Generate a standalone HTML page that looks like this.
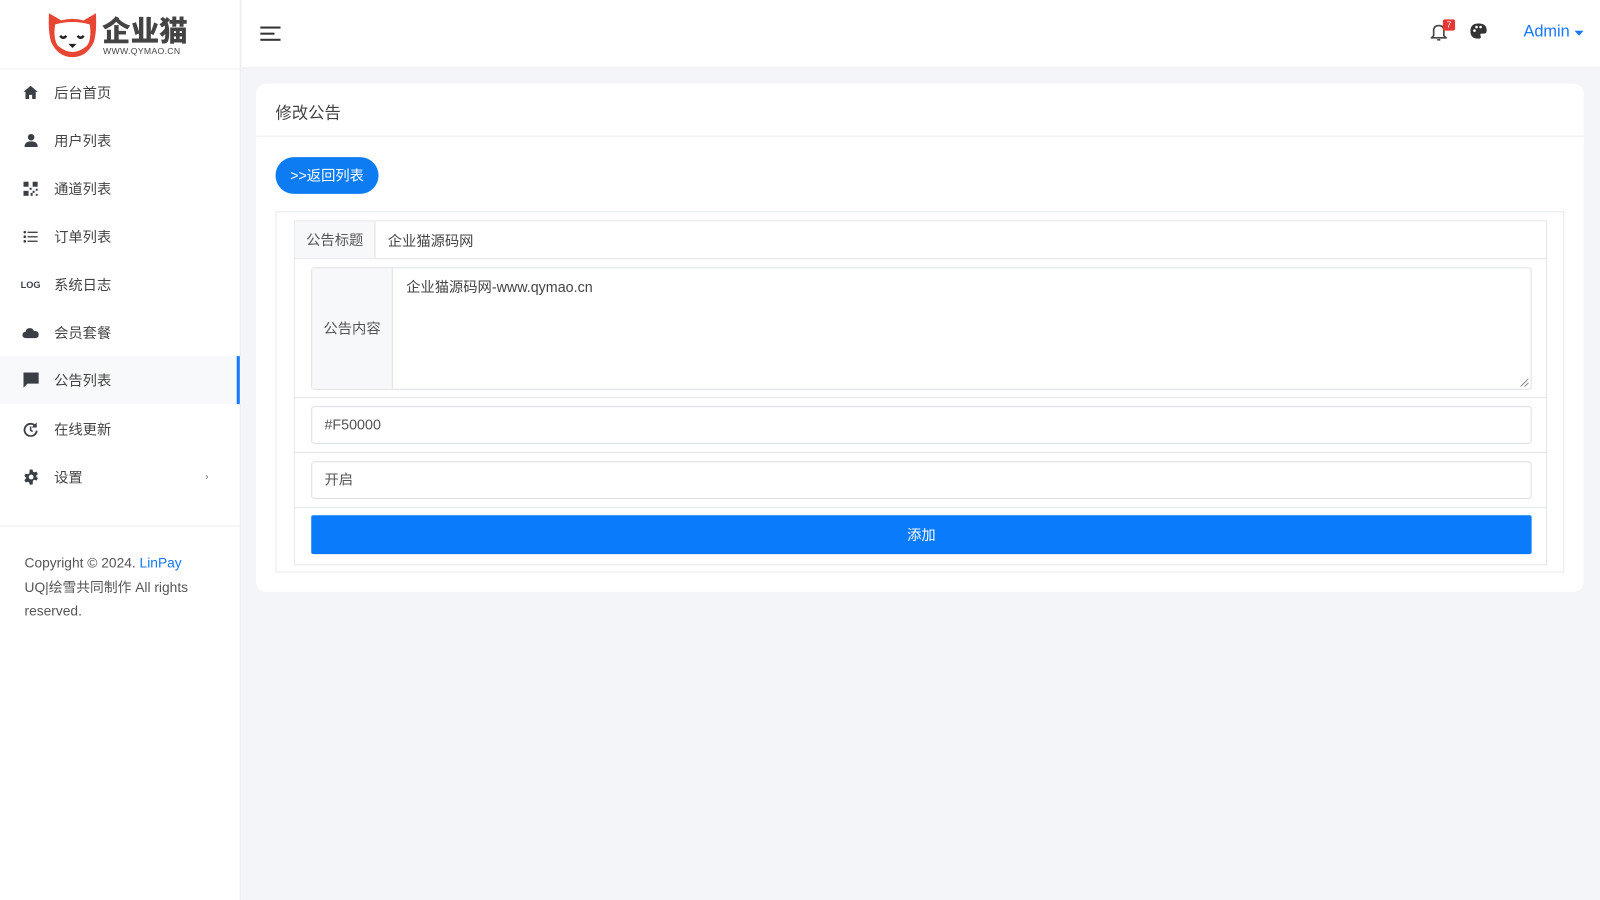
<!DOCTYPE html>
<html><head><meta charset="utf-8">
<style>
*{box-sizing:border-box;margin:0;padding:0}
html,body{width:1600px;height:900px;overflow:hidden;background:#f3f5f9}
body{font-family:"Liberation Sans","Noto Sans CJK SC",sans-serif;font-size:14px;color:#333}
.wrap{position:absolute;left:0;top:0;width:1568px;height:882px;transform:scale(1.0204);transform-origin:0 0}
.side{position:absolute;left:0;top:0;width:236px;height:882px;background:#fff;border-right:1px solid #e8eaef}
.logo{height:68px;border-bottom:1px solid #eef0f3;position:relative}
.item{position:absolute;left:0;width:236px;height:47px;display:flex;align-items:center;color:#444;font-size:14px}
.item .ic{width:16px;height:16px;margin-left:22px;margin-right:15px;display:flex;align-items:center;justify-content:center}
.item.act{background:#f8f9fa}
.item.act:after{content:"";position:absolute;right:1px;top:0;width:3px;height:47px;background:#1677ff}
.top{position:absolute;left:237px;top:0;width:1331px;height:67px;background:#fff;border-bottom:1px solid #e8eaef}
.card{position:absolute;left:251px;top:82px;width:1301px;height:498px;background:#fff;border-radius:10px}
.ch{height:52px;border-bottom:1px solid #eceef1;padding:15px 19px;font-size:16px;color:#444}
.btn{position:absolute;left:19px;top:72px;width:101px;height:36px;border-radius:18px;background:#0d7cf2;color:#fff;font-size:14px;text-align:center;line-height:36px}
.box{position:absolute;border:1px solid #e6e8eb}
.lab{background:#f7f8fa;color:#555;border-right:1px solid #dfe2e6;position:absolute;top:0;bottom:0;display:flex;align-items:center;justify-content:center}
.inp{position:absolute;left:52px;width:1196px;height:37px;border:1px solid #dcdfe3;border-radius:3px;padding:0 12px;line-height:35px;color:#555}
</style></head><body>
<div class="wrap">
<div class="side">
 <div class="logo">
  <svg style="position:absolute;left:45px;top:11px" width="52" height="46" viewBox="0 0 52 46"><path d="M3 2 L15 9 Q26 6 37 9 L49 2 Q50 20 47 30 Q40 45 26 45 Q12 45 5 30 Q2 20 3 2Z" fill="#e84634"/><path d="M9 13 Q26 8 43 13 Q45 28 40 34 Q33 40 26 40 Q19 40 12 34 Q7 28 9 13Z" fill="#fff"/><path d="M14 24 q3 4 6 0" stroke="#222" stroke-width="2.4" fill="none"/><path d="M31 24 q3 4 6 0" stroke="#222" stroke-width="2.4" fill="none"/><path d="M22 32 h8 l-4 4z" fill="#222"/></svg>
  <div style="position:absolute;left:100px;top:9px;font-size:28px;font-weight:900;color:#444;letter-spacing:0">企业猫</div>
  <div style="position:absolute;left:101px;top:45px;font-size:8.5px;color:#444;letter-spacing:.3px">WWW.QYMAO.CN</div>
 </div>
 <div class="item" style="top:67px"><span class="ic"><svg width="14" height="13" viewBox="0 0 14 13"><path d="M7 0 L14 6 H12 V13 H8.5 V9 H5.5 V13 H2 V6 H0Z" fill="#3a3f46"/></svg></span>后台首页</div>
 <div class="item" style="top:114px"><span class="ic"><svg width="13" height="13" viewBox="0 0 13 13"><circle cx="6.5" cy="3.5" r="3.2" fill="#3a3f46"/><path d="M0 13 Q0 7.5 6.5 7.5 Q13 7.5 13 13Z" fill="#3a3f46"/></svg></span>用户列表</div>
 <div class="item" style="top:161px"><span class="ic"><svg width="14" height="14" viewBox="0 0 14 14" fill="#3a3f46"><rect x="0" y="0" width="5" height="5"/><rect x="9" y="0" width="5" height="5"/><rect x="0" y="9" width="5" height="5"/><rect x="6" y="6" width="2" height="2"/><rect x="9" y="9" width="2" height="2"/><rect x="12" y="12" width="2" height="2"/><rect x="12" y="7" width="2" height="2"/><rect x="7" y="11" width="2" height="3"/></svg></span>通道列表</div>
 <div class="item" style="top:208px"><span class="ic"><svg width="14" height="12" viewBox="0 0 14 12" fill="#3a3f46"><circle cx="1.3" cy="1.5" r="1.3"/><circle cx="1.3" cy="6" r="1.3"/><circle cx="1.3" cy="10.5" r="1.3"/><rect x="4" y="1" width="10" height="1.3"/><rect x="4" y="5.4" width="10" height="1.3"/><rect x="4" y="9.8" width="10" height="1.3"/></svg></span>订单列表</div>
 <div class="item" style="top:255px"><span class="ic" style="font-size:9px;font-weight:bold;color:#3a3f46">LOG</span>系统日志</div>
 <div class="item" style="top:302px"><span class="ic"><svg width="18" height="12" viewBox="0 0 18 12"><path d="M4 12 Q0 12 0 8.5 Q0 5.5 3.5 5 Q4 1 8 1 Q11.5 1 12.5 4 Q18 4 18 8 Q18 12 14 12Z" fill="#3a3f46"/></svg></span>会员套餐</div>
 <div class="item act" style="top:349px"><span class="ic"><svg width="15" height="15" viewBox="0 0 15 15"><path d="M0 0 H15 V11 H4 L0 15Z" fill="#3a3f46"/></svg></span>公告列表</div>
 <div class="item" style="top:397px"><span class="ic"><svg width="14" height="14" viewBox="0 0 14 14"><path d="M12 4 A6 6 0 1 0 13 8" stroke="#3a3f46" stroke-width="1.8" fill="none"/><path d="M13 0 V5 H8Z" fill="#3a3f46"/><path d="M7 4 V7.5 L9 9" stroke="#3a3f46" stroke-width="1.5" fill="none"/></svg></span>在线更新</div>
 <div class="item" style="top:444px"><span class="ic"><svg width="15" height="15" viewBox="0 0 16 16"><path fill="#3a3f46" d="M6.5 0h3l.4 2.2 1.6.9 2.1-.8 1.5 2.6-1.7 1.4v1.4l1.7 1.4-1.5 2.6-2.1-.8-1.6.9L9.5 16h-3l-.4-2.2-1.6-.9-2.1.8L.9 11.1l1.7-1.4V8.3L.9 6.9 2.4 4.3l2.1.8 1.6-.9z"/><circle cx="8" cy="8" r="2.5" fill="#fff"/></svg></span>设置<span style="position:absolute;left:201px;font-size:10px;color:#666">›</span></div>
 <div style="position:absolute;top:515px;left:0;width:236px;border-top:1px solid #e8eaef"></div>
 <div style="position:absolute;top:540px;left:24px;width:180px;font-size:13.5px;line-height:23.5px;color:#555">Copyright © 2024. <span style="color:#1677ff">LinPay</span> UQ|绘雪共同制作 All rights reserved.</div>
</div>
<div class="top">
 <svg style="position:absolute;left:18px;top:25px" width="20" height="16" viewBox="0 0 20 16"><rect y="1" width="20" height="2" fill="#333"/><rect y="7" width="14" height="2" fill="#333"/><rect y="13" width="20" height="2" fill="#333"/></svg>
 <svg style="position:absolute;left:1165px;top:22px" width="16" height="19" viewBox="0 0 16 19"><path d="M3 13 V8 Q3 3 8 3 Q13 3 13 8 V13 L15 15 H1Z" stroke="#444" stroke-width="1.6" fill="none"/><path d="M6.5 17 h3" stroke="#444" stroke-width="1.6"/></svg>
 <div style="position:absolute;left:1177px;top:19px;width:12px;height:11px;background:#e53935;color:#fff;font-size:8px;text-align:center;line-height:11px;border-radius:2px">7</div>
 <svg style="position:absolute;left:1204px;top:23px" width="16" height="15" viewBox="0 0 16 15"><path d="M8 0 Q16 0 16 7 Q16 10 13 10 H11 Q9 10 10 12 Q11 15 8 15 Q0 15 0 7.5 Q0 0 8 0Z" fill="#333"/><circle cx="4" cy="7" r="1.3" fill="#fff"/><circle cx="6" cy="3.5" r="1.3" fill="#fff"/><circle cx="10" cy="3.5" r="1.3" fill="#fff"/></svg>
 <div style="position:absolute;left:1256px;top:23px;font-size:16px;color:#1677ff">Admin</div>
 <svg style="position:absolute;left:1306px;top:30px" width="9" height="5"><path d="M0 0H9L4.5 5Z" fill="#1677ff"/></svg>
</div>
<div class="card">
 <div class="ch">修改公告</div>
 <div class="btn">&gt;&gt;返回列表</div>
 <div class="box" style="left:19px;top:125px;width:1263px;height:354px">
  <div class="box" style="left:17px;top:8px;width:1228px;height:338px;border-color:#e4e6ea">
   <div style="position:absolute;left:0;top:0;right:0;height:37px;border-bottom:1px solid #e4e6ea">
    <div class="lab" style="left:0;width:79px">公告标题</div>
    <div style="position:absolute;left:91px;top:9px;color:#444">企业猫源码网</div>
   </div>
   <div style="position:absolute;left:16px;top:45px;width:1196px;height:120px;border:1px solid #dcdfe3;border-radius:3px">
    <div class="lab" style="left:0;width:79px">公告内容</div>
    <div style="position:absolute;left:92px;top:8px;color:#444">企业猫源码网-www.qymao.cn</div>
    <svg style="position:absolute;right:2px;bottom:2px" width="8" height="8"><path d="M8 0L0 8M8 4L4 8" stroke="#888"/></svg>
   </div>
   <div style="position:absolute;left:0;right:0;top:172px;border-top:1px solid #e4e6ea"></div>
   <div class="inp" style="left:16px;top:181px">#F50000</div>
   <div style="position:absolute;left:0;right:0;top:226px;border-top:1px solid #e4e6ea"></div>
   <div class="inp" style="left:16px;top:235px">开启</div>
   <div style="position:absolute;left:0;right:0;top:280px;border-top:1px solid #e4e6ea"></div>
   <div style="position:absolute;left:16px;top:288px;width:1196px;height:38px;background:#0a7bfa;border-radius:2px;color:#fff;text-align:center;line-height:38px">添加</div>
  </div>
 </div>
</div>
</div>
</body></html>
